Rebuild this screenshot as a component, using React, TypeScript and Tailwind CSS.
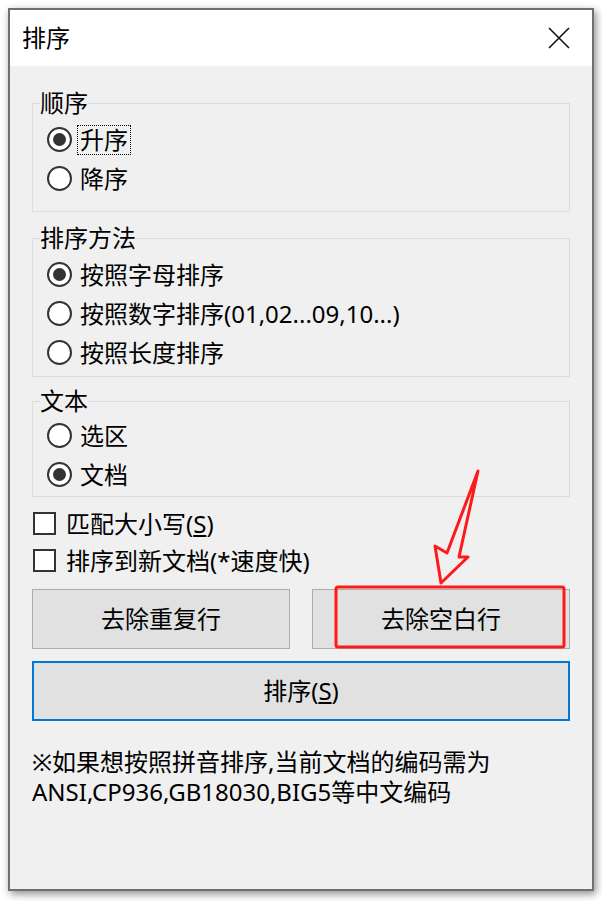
const RadioRow = ({
  label,
  checked = false,
  focused = false,
}: {
  label: string;
  checked?: boolean;
  focused?: boolean;
}) => {
  return (
    <div className="flex h-[39px] items-center">
      <span className="flex h-[25px] w-[25px] shrink-0 items-center justify-center rounded-full border-2 border-[#333] bg-white">
        {checked && <span className="h-[13px] w-[13px] rounded-full bg-[#333]" />}
      </span>
      <span
        className={`ml-[6px] px-[2px] leading-[28px] ${
          focused ? 'outline-1 outline-dotted outline-black' : ''
        }`}
      >
        {label}
      </span>
    </div>
  );
};

const CheckRow = ({ children }: { children: React.ReactNode }) => {
  return (
    <div className="flex h-[37px] items-center pl-[1px]">
      <span className="h-[23px] w-[23px] shrink-0 border-2 border-[#333] bg-white" />
      <span className="ml-[10px] leading-[28px]">{children}</span>
    </div>
  );
};

const Group = ({
  title,
  className = '',
  children,
}: {
  title: string;
  className?: string;
  children: React.ReactNode;
}) => {
  return (
    <fieldset className={`border border-[#dcdcdc] ${className}`}>
      <legend className="ml-[7px] px-0 leading-[28px]">{title}</legend>
      <div className="pl-[14px]">{children}</div>
    </fieldset>
  );
};

export default function App() {
  return (
    <div className="relative h-[901px] w-[602px] overflow-hidden bg-white pl-[8px] pt-[8px] font-['Noto_Sans','Noto_Sans_CJK_SC',sans-serif] text-[24px] text-black">
      <div className="flex h-[883px] w-[586px] flex-col border-2 border-[#707070] shadow-[2px_3px_8px_rgba(0,0,0,0.45)]">
        {/* title bar */}
        <div className="flex h-[56px] items-center justify-between bg-white pl-[12px] pr-[22px]">
          <span className="leading-[28px]">排序</span>
          <svg width="22" height="22" viewBox="0 0 22 22" fill="none" stroke="#111" strokeWidth="1.6">
            <path d="M1 1 L21 21 M21 1 L1 21" />
          </svg>
        </div>

        <div className="flex-1 bg-[#f0f0f0] px-[22px] pt-[23px]">
          <Group title="顺序" className="pb-[13px]">
            <div className="mt-[3px]">
              <RadioRow label="升序" checked focused />
              <RadioRow label="降序" />
            </div>
          </Group>

          <Group title="排序方法" className="mt-[12px] pb-[4px]">
            <div className="mt-[3px]">
              <RadioRow label="按照字母排序" checked />
              <RadioRow label="按照数字排序(01,02...09,10...)" />
              <RadioRow label="按照长度排序" />
            </div>
          </Group>

          <Group title="文本" className="mt-[10px] pb-[2px]">
            <div className="mt-[1px]">
              <RadioRow label="选区" />
              <RadioRow label="文档" checked />
            </div>
          </Group>

          <div className="mt-[8px]">
            <CheckRow>
              匹配大小写(<u>S</u>)
            </CheckRow>
            <CheckRow>排序到新文档(*速度快)</CheckRow>
          </div>

          <div className="mt-[10px] grid grid-cols-2 gap-[22px]">
            <button className="h-[60px] border border-[#adadad] bg-[#e1e1e1]">去除重复行</button>
            <button className="h-[60px] border border-[#adadad] bg-[#e1e1e1]">去除空白行</button>
          </div>

          <button className="mt-[12px] h-[60px] w-full border-2 border-[#0078d7] bg-[#e1e1e1]">
            排序(<u>S</u>)
          </button>

          <p className="mt-[26px] leading-[30px]">
            ※如果想按照拼音排序,当前文档的编码需为
            <br />
            ANSI,CP936,GB18030,BIG5等中文编码
          </p>
        </div>
      </div>

      {/* annotation drawn over the dialog */}
      <svg
        className="pointer-events-none absolute left-0 top-0"
        width="602"
        height="901"
        viewBox="0 0 602 901"
        fill="none"
      >
        <rect x="336" y="587" width="228" height="60" rx="2" stroke="#ff1a1a" strokeWidth="3" />
        <polygon
          points="478,471 447,553 435,546 441,583 468,557 459,557"
          stroke="#ff1a1a"
          strokeWidth="3"
          strokeLinejoin="round"
        />
      </svg>
    </div>
  );
}
